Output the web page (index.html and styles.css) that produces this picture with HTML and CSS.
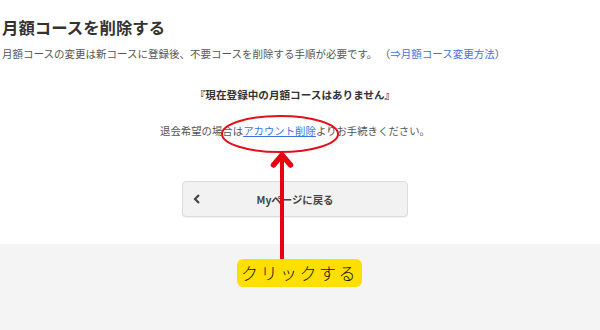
FILE: index.html
```html
<!DOCTYPE html>
<html lang="ja">
<head>
<meta charset="utf-8">
<link rel="stylesheet" href="styles.css">
</head>
<body>
<div class="page">
  <h1 class="title">月額コースを削除する</h1>
  <p class="note">月額コースの変更は新コースに登録後、不要コースを削除する手順が必要です。 （<a class="link" href="#">⇒月額コース変更方法</a>）</p>
  <div class="center">
    <p class="empty">『現在登録中の月額コースはありません』</p>
    <p class="leave">退会希望の場合は<a class="link ul" href="#">アカウント削除</a>よりお手続きください。</p>
    <a class="back" href="#">
      <svg class="chev" width="8" height="10" viewBox="0 0 8 10"><polyline points="6,1 2,5 6,9" fill="none" stroke="#444" stroke-width="2.2"/></svg>
      <span class="back-text">Myページに戻る</span>
    </a>
  </div>
  <div class="footer"></div>

  <svg class="overlay" width="600" height="330" viewBox="0 0 600 330">
    <ellipse cx="280" cy="134" rx="58" ry="18" fill="none" stroke="#e2101c" stroke-width="2"/>
    <line x1="282" y1="156" x2="282" y2="262" stroke="#e60012" stroke-width="4"/>
    <polyline points="273.5,165 282,155 290.5,165" fill="none" stroke="#e60012" stroke-width="5.5" stroke-linecap="round" stroke-linejoin="miter"/>
  </svg>
  <div class="label">クリックする</div>
</div>
</body>
</html>
```
FILE: styles.css
```css
html, body {
  margin: 0;
  padding: 0;
  background: #fff;
}
body {
  font-family: "Noto Sans CJK JP", "Noto Sans", sans-serif;
  color: #555;
}
.page {
  position: relative;
  width: 600px;
  height: 330px;
  overflow: hidden;
}
.title {
  margin: 0;
  padding: 17px 0 0 2px;
  font-size: 16.4px;
  line-height: 20px;
  font-weight: bold;
  color: #333;
}
.note {
  margin: 9px 0 0 2px;
  font-size: 10.5px;
  line-height: 16px;
  color: #555;
  white-space: nowrap;
}
.link {
  color: #3f72e0;
  text-decoration: none;
}
.link.ul {
  text-decoration: underline;
}
.center {
  width: 590px;
  display: flex;
  flex-direction: column;
  align-items: center;
}
.empty {
  margin: 25px 0 0;
  font-size: 10.6px;
  line-height: 16px;
  font-weight: bold;
  color: #333;
}
.leave {
  margin: 20px 0 0;
  font-size: 10.4px;
  line-height: 16px;
  color: #555;
}
.back {
  margin-top: 42px;
  width: 224px;
  height: 34px;
  box-sizing: content-box;
  border: 1px solid #dcdcdc;
  border-radius: 4px;
  background: #f2f2f2;
  box-shadow: 0 1px 1px rgba(0,0,0,0.06);
  display: flex;
  align-items: center;
  text-decoration: none;
  position: relative;
}
.chev {
  margin-left: 10px;
}
.back-text {
  flex: 1;
  text-align: center;
  margin-right: 18px;
  font-size: 10.4px;
  font-weight: bold;
  color: #444;
}
.footer {
  margin-top: 27px;
  height: 90px;
  background: #f4f4f4;
}
.overlay {
  position: absolute;
  left: 0;
  top: 0;
}
.label {
  position: absolute;
  left: 237px;
  top: 259px;
  width: 125px;
  height: 28px;
  border-radius: 6px;
  background: #ffdf00;
  color: #111;
  font-size: 17px;
  font-weight: 300;
  letter-spacing: 2.5px;
  line-height: 28px;
  text-align: center;
}
```
